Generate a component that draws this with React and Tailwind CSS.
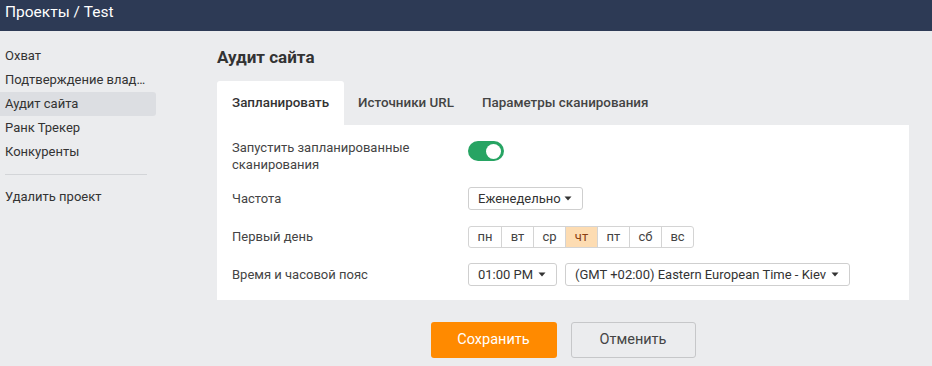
import React from "react";

const Caret = () => (
  <svg width="8" height="5" viewBox="0 0 8 5" className="shrink-0">
    <path d="M0.5 0.5 L7.5 0.5 L4 4.5 Z" fill="#333" />
  </svg>
);

function Select({ value, w }) {
  return (
    <div
      className={`flex h-[23px] items-center justify-between rounded-[3px] border border-[#cfcfcf] bg-white pl-[9px] pr-[10px] text-[13px] text-[#333] ${w}`}
    >
      <span className="whitespace-nowrap">{value}</span>
      <Caret />
    </div>
  );
}

export default function App() {
  const side = ["Охват", "Подтверждение влад…", "Аудит сайта", "Ранк Трекер", "Конкуренты"];
  const days = ["пн", "вт", "ср", "чт", "пт", "сб", "вс"];
  return (
    <div
      className="flex h-[366px] w-[932px] flex-col overflow-hidden bg-[#ebecee]"
      style={{ fontFamily: "Roboto, 'Liberation Sans', sans-serif" }}
    >
      <header className="h-[31px] shrink-0 bg-[#2d3a55] px-[5px] text-[15.5px] leading-[24px] text-white">
        Проекты / Test
      </header>
      <div className="flex flex-1">
        <aside className="w-[156px] shrink-0 pt-[13px] text-[13px] text-[#333]">
          {side.map((s) => (
            <div
              key={s}
              className={`flex h-[24px] items-center whitespace-nowrap pl-[5px] ${
                s === "Аудит сайта" ? "rounded-r-[3px] bg-[#dcdee2]" : ""
              }`}
            >
              {s}
            </div>
          ))}
          <div className="ml-[5px] mt-[10px] mr-[9px] border-t border-[#d3d5d8]" />
          <div className="mt-[10px] flex h-[24px] items-center pl-[5px]">Удалить проект</div>
        </aside>
        <main className="flex-1 pl-[61px] pr-[23px] pt-[14px]">
          <h1 className="text-[17px] font-bold leading-[24px] text-[#333]">Аудит сайта</h1>
          <div className="mt-[12px] flex h-[44px] text-[13.4px] font-medium">
            <div className="flex items-center rounded-t-[3px] bg-white px-[15px] text-[#333]">
              Запланировать
            </div>
            <div className="flex items-center px-[14px] text-[#444]">Источники URL</div>
            <div className="flex items-center px-[14px] text-[#444]">Параметры сканирования</div>
          </div>
          <div className="bg-white px-[15px] pb-[14px] pt-[14px] text-[13px] text-[#444]">
            <div className="flex">
              <div className="w-[236px] pr-[20px] leading-[17px]">
                Запустить запланированные сканирования
              </div>
              <div className="mt-[2px] flex h-[20px] w-[36px] items-center justify-end rounded-full bg-[#27a463] pr-[3px]">
                <div className="h-[15px] w-[15px] rounded-full bg-white" />
              </div>
            </div>
            <div className="mt-[14px] flex h-[23px] items-center">
              <div className="w-[236px]">Частота</div>
              <Select value="Еженедельно" w="w-[115px]" />
            </div>
            <div className="mt-[16px] flex h-[22px] items-center">
              <div className="w-[236px]">Первый день</div>
              <div className="flex h-[22px] overflow-hidden rounded-[3px] border border-[#d4d4d4]">
                {days.map((d, i) => (
                  <div
                    key={d}
                    className={`flex w-[32px] items-center justify-center ${
                      i > 0 ? "border-l border-[#d4d4d4]" : ""
                    } ${d === "чт" ? "bg-[#fddcb2] text-[#8a3f12]" : "text-[#444]"}`}
                  >
                    {d}
                  </div>
                ))}
              </div>
            </div>
            <div className="mt-[15px] flex h-[23px] items-center">
              <div className="w-[236px]">Время и часовой пояс</div>
              <div className="flex gap-[8px]">
                <Select value="01:00 PM" w="w-[89px]" />
                <Select value="(GMT +02:00) Eastern European Time - Kiev" w="w-[285px]" />
              </div>
            </div>
          </div>
          <div className="mt-[22px] flex justify-center gap-[14px] text-[14.5px]">
            <button className="h-[36px] w-[126px] rounded-[3px] bg-[#ff8a00] text-white">
              Сохранить
            </button>
            <button className="h-[36px] w-[125px] rounded-[3px] border border-[#c6c7c9] bg-[#ebecee] text-[#444]">
              Отменить
            </button>
          </div>
        </main>
      </div>
    </div>
  );
}
